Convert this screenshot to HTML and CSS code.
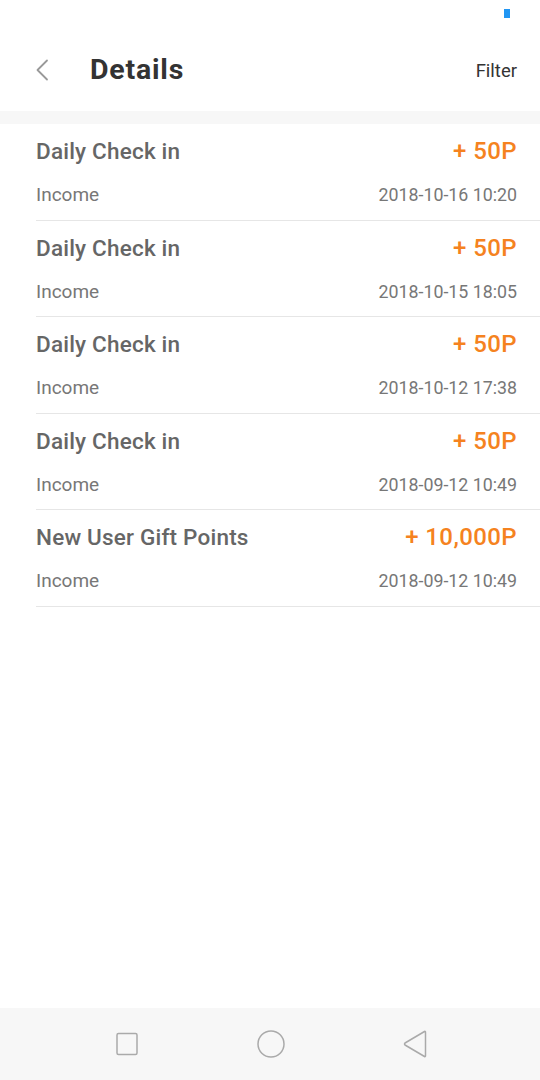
FILE: index.html
```html
<!DOCTYPE html>
<html>
<head>
<meta charset="utf-8">
<link rel="stylesheet" href="styles.css">
</head>
<body>
<div class="screen">
  <div class="status"><span class="status-dot"></span></div>
  <header class="topbar">
    <svg class="back" width="14" height="22" viewBox="0 0 14 22"><path d="M12 1.5 L2.5 11 L12 20.5" fill="none" stroke="#999" stroke-width="1.8" stroke-linecap="round" stroke-linejoin="round"/></svg>
    <h1 class="title">Details</h1>
    <span class="filter">Filter</span>
  </header>
  <div class="band"></div>
  <ul class="list">
    <li class="row"><div class="line"><span class="name">Daily Check in</span><span class="pts">+ 50P</span></div><div class="line sub"><span>Income</span><span class="date">2018-10-16 10:20</span></div></li>
    <li class="row"><div class="line"><span class="name">Daily Check in</span><span class="pts">+ 50P</span></div><div class="line sub"><span>Income</span><span class="date">2018-10-15 18:05</span></div></li>
    <li class="row"><div class="line"><span class="name">Daily Check in</span><span class="pts">+ 50P</span></div><div class="line sub"><span>Income</span><span class="date">2018-10-12 17:38</span></div></li>
    <li class="row"><div class="line"><span class="name">Daily Check in</span><span class="pts">+ 50P</span></div><div class="line sub"><span>Income</span><span class="date">2018-09-12 10:49</span></div></li>
    <li class="row"><div class="line"><span class="name">New User Gift Points</span><span class="pts">+ 10,000P</span></div><div class="line sub"><span>Income</span><span class="date">2018-09-12 10:49</span></div></li>
  </ul>
  <div class="spacer"></div>
  <nav class="navbar">
    <svg width="24" height="24" viewBox="0 0 24 24"><rect x="2" y="1.5" width="20" height="21" rx="1.5" fill="none" stroke="#aaa" stroke-width="1.5"/></svg>
    <svg width="30" height="30" viewBox="0 0 30 30"><circle cx="15" cy="15" r="13" fill="none" stroke="#aaa" stroke-width="1.5"/></svg>
    <svg width="26" height="30" viewBox="0 0 26 30"><path d="M22.5 2.5 Q23.5 2 23.5 3.5 L23.5 26.5 Q23.5 28 22.5 27.5 L3 16 Q2 15 3 14 Z" fill="none" stroke="#aaa" stroke-width="1.5" stroke-linejoin="round"/></svg>
  </nav>
</div>
</body>
</html>
```
FILE: styles.css
```css
* { box-sizing: border-box; }
html, body { margin: 0; padding: 0; }
body { font-family: Roboto, "Noto Sans", sans-serif; background: #fff; }
.screen { width: 540px; height: 1080px; display: flex; flex-direction: column; }
.status { height: 27px; display: flex; justify-content: flex-end; padding: 9px 30px 0 0; }
.status-dot { width: 6px; height: 9px; background: #2196f3; display: block; }
.topbar { height: 84px; display: flex; align-items: center; padding: 0 23px 0 35px; }
.back { margin-top: 2px; }
.title { margin: 0 0 0 41px; font-size: 28.5px; font-weight: 700; color: #333; flex: 1; letter-spacing: 0.8px; }
.filter { font-size: 18.5px; color: #333; margin-top: 3px; }
.band { height: 13px; background: #f7f7f7; }
.list { list-style: none; margin: 0; padding: 0 0 0 36px; }
.row { height: 96.5px; border-bottom: 1px solid #e6e6e6; padding: 13px 23px 0 0; display: flex; flex-direction: column; }
.line { display: flex; justify-content: space-between; align-items: center; }
.name { font-size: 22.5px; font-weight: 500; color: #666; height: 28px; line-height: 28px; letter-spacing: 0.2px; }
.pts { font-size: 24px; font-weight: 500; color: #f58220; height: 28px; line-height: 28px; letter-spacing: 0.4px; }
.sub { margin-top: 18px; font-size: 19px; color: #777; height: 24px; line-height: 24px; }
.date { font-size: 17.8px; }
.spacer { flex: 1; }
.navbar { height: 72px; background: #f7f7f7; display: flex; align-items: center; justify-content: space-between; padding: 0 112px 0 115px; }
```
